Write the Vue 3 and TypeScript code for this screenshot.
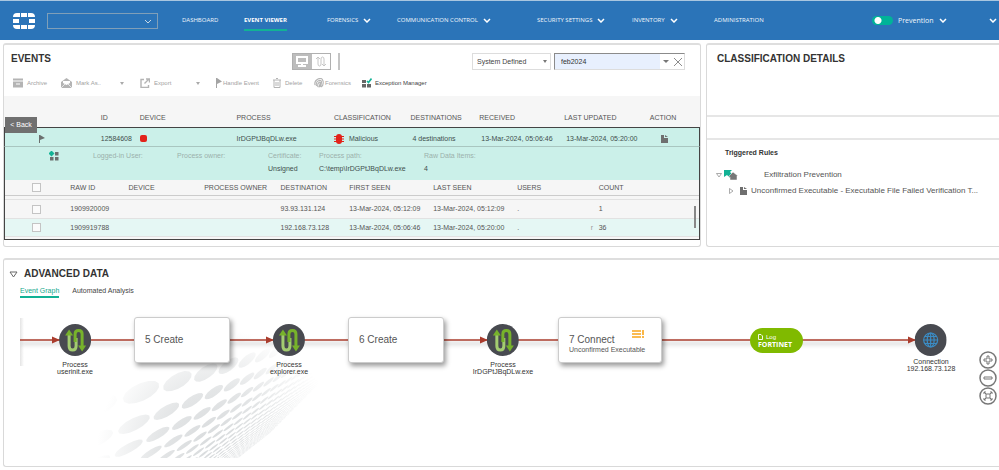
<script setup lang="ts">
import { ref } from 'vue'

interface NavItem { label: string; menu?: boolean; active?: boolean }
interface RawRow { id: string; destination: string; first: string; last: string; users: string; mark: string; count: string }
interface GraphNode { x: number; kind: string; name: string; icon: 'process' | 'globe' }
interface GraphStep { x: number; w: number; title: string; note?: string }

const nav: NavItem[] = [
  { label: 'DASHBOARD' },
  { label: 'EVENT VIEWER', active: true },
  { label: 'FORENSICS', menu: true },
  { label: 'COMMUNICATION CONTROL', menu: true },
  { label: 'SECURITY SETTINGS', menu: true },
  { label: 'INVENTORY', menu: true },
  { label: 'ADMINISTRATION' },
]

const rows: RawRow[] = [
  { id: '1909920009', destination: '93.93.131.124', first: '13-Mar-2024, 05:12:09', last: '13-Mar-2024, 05:12:09', users: '.', mark: '', count: '1' },
  { id: '1909919788', destination: '192.168.73.128', first: '13-Mar-2024, 05:06:46', last: '13-Mar-2024, 05:20:00', users: '.', mark: 'r', count: '36' },
]

const nodes: GraphNode[] = [
  { x: 55, kind: 'Process', name: 'userinit.exe', icon: 'process' },
  { x: 269, kind: 'Process', name: 'explorer.exe', icon: 'process' },
  { x: 483, kind: 'Process', name: 'IrDGPtJBqDLw.exe', icon: 'process' },
  { x: 911, kind: 'Connection', name: '192.168.73.128', icon: 'globe' },
]

const steps: GraphStep[] = [
  { x: 114, w: 96, title: '5 Create' },
  { x: 328, w: 96, title: '6 Create' },
  { x: 538, w: 104, title: '7 Connect', note: 'Unconfirmed Executable' },
]

const search = ref('feb2024')
const prevention = ref(true)

// Halftone floor: a lattice of discs seen in perspective.
function project(i: number, j: number): string {
  const w = 1 + 0.14 * i + 0.17 * j
  return `${((145 * i + j + 156) / w).toFixed(1)} ${((154 * j - 3 * i + 247) / w).toFixed(1)}`
}
function halftone(): string {
  let d = ''
  for (let i = -1; i < 34; i++) {
    for (let j = -1; j < 22; j++) {
      for (let k = 0; k < 14; k++) {
        const t = (k / 14) * Math.PI * 2
        d += `${k ? 'L' : 'M'}${project(i + 0.44 * Math.cos(t), j + 0.27 * Math.sin(t))}`
      }
      d += 'Z'
    }
  }
  return d
}
const dots = halftone()
</script>

<template>
  <div class="app">
    <header class="topbar">
      <svg class="logo" viewBox="0 0 22 16" aria-label="Fortinet">
        <path fill="#fff" d="M4 0h3v4H0A4 4 0 0 1 4 0zM8 0h6v4H8zM15 0h3a4 4 0 0 1 4 4h-7zM0 6h6v4H0zM16 6h6v4h-6zM0 12h7v4H4a4 4 0 0 1-4-4zM8 12h6v4H8zM15 12h7a4 4 0 0 1-4 4h-3z" />
      </svg>
      <div class="org">
        <select aria-label="Organization"><option></option></select>
        <svg class="chev" viewBox="0 0 8 5"><path d="M1 1l3 3 3-3" /></svg>
      </div>
      <nav class="nav">
        <a v-for="n in nav" :key="n.label" href="#" :class="{ active: n.active }">
          <span>{{ n.label }}</span>
          <svg v-if="n.menu" class="chev bold" viewBox="0 0 8 5"><path d="M1 1l3 3 3-3" /></svg>
        </a>
      </nav>
      <label class="switch">
        <input v-model="prevention" type="checkbox" />
        <span>Prevention</span>
        <svg class="chev bold" viewBox="0 0 8 5"><path d="M1 1l3 3 3-3" /></svg>
      </label>
      <button class="user" aria-label="Account">
        <svg class="chev bold" viewBox="0 0 8 5"><path d="M1 1l3 3 3-3" /></svg>
      </button>
    </header>

    <main class="board">
      <section class="panel events">
        <div class="head">
          <h2>EVENTS</h2>
          <div class="views">
            <button class="on" aria-label="Device view">
              <svg viewBox="0 0 12 11"><path fill="#fff" fill-rule="evenodd" d="M0 0h12v8H7v1h3v2H2V9h3V8H0zM2 2v4h8V2z" /></svg>
            </button>
            <button aria-label="Process view">
              <svg viewBox="0 0 12 11" fill="none" stroke="#c6c6c6"><path d="M1 3l2-2 2 2M3 1v7q0 2 1.500 2T6 8V3q0-2 1.500-2T9 3v7M7 8l2 2 2-2" /></svg>
            </button>
          </div>
          <div class="filters">
            <div class="pick">
              <select aria-label="Filter"><option>System Defined</option></select>
              <i class="tri"></i>
            </div>
            <div class="search">
              <input v-model="search" type="text" aria-label="Search" />
              <button aria-label="Search history"><i class="tri big"></i></button>
              <button aria-label="Clear search">
                <svg viewBox="0 0 10 10" width="10" height="10" stroke="#8c8c8c" fill="none"><path d="M1 1l8 8M9 1L1 9" /></svg>
              </button>
            </div>
          </div>
        </div>

        <div class="tools">
          <button>
            <svg viewBox="0 0 10 9" fill="#b4b4b4"><path d="M0 0h10v2H0zM0 3h10v6H0z" /><path fill="#fff" d="M3 5h4v1H3z" /></svg>Archive
          </button>
          <button>
            <svg class="wide" viewBox="0 0 11 10"><path fill="#b4b4b4" d="M0 4l5.500-4L11 4v6H0z" /><path fill="#fff" d="M2 3h7v2L5.500 7 2 5z" /><path fill="none" stroke="#fff" stroke-width=".7" d="M0 10l4-4M11 10L7 6" /></svg>Mark As..<i class="tri"></i>
          </button>
          <button>
            <svg viewBox="0 0 10 10" fill="none" stroke="#b4b4b4" stroke-width="1.400"><path d="M4 1.500H1v8h7.500V7M6 1h3.500v3.500M9 1L4.500 5.500" /></svg>Export<i class="tri"></i>
          </button>
          <button class="tight"><svg class="slim" viewBox="0 0 6 10" fill="#a4a4a4"><path d="M0 0h1l5 3.500L1 6v4H0z" /></svg>Handle Event</button>
          <button><svg class="mid" viewBox="0 0 8 10" fill="none" stroke="#b4b4b4"><path d="M0 2h8M3 .5h2M1 2v7.500h6V2M3 4v4M5 4v4" /></svg>Delete</button>
          <button class="tight"><svg viewBox="0 0 10 10" fill="none" stroke="#b4b4b4" stroke-width="1.100"><path d="M1 7Q0 3 4 1t5 2-2 6M2.500 8Q1.500 4 4.500 2.800T7.500 4 6 9M4 9Q3 6 5 4.500T6 6 5 9.500" /></svg>Forensics</button>
          <button class="live"><svg viewBox="0 0 10 10"><path fill="#666" d="M0 2h4v3H0zM0 6h4v3.500H0zM5 6h4v3.500H5z" /><path fill="none" stroke="#12b295" stroke-width="1.600" d="M5 3l1.500 1.500L9.500.5" /></svg>Exception Manager</button>
        </div>

        <div class="grid">
          <button class="back">&lt; Back</button>
          <table class="list">
            <colgroup><col style="width: 13.900%" /><col style="width: 5.600%" /><col style="width: 13.900%" /><col style="width: 14%" /><col style="width: 11%" /><col style="width: 9.900%" /><col style="width: 12.200%" /><col style="width: 12.300%" /><col style="width: 7.200%" /></colgroup>
            <thead>
              <tr>
                <th></th><th>ID</th><th>DEVICE</th><th>PROCESS</th><th>CLASSIFICATION</th><th>DESTINATIONS</th><th>RECEIVED</th><th>LAST UPDATED</th><th>ACTION</th>
              </tr>
            </thead>
            <tbody>
              <tr class="event">
                <td class="flag"><svg viewBox="0 0 6 8" width="6" height="8" fill="#6b6f6e"><path d="M0 0h1l5 3-5 2v3H0z" /></svg></td>
                <td>12584608</td>
                <td><svg viewBox="0 0 7 7" width="7" height="7"><rect width="7" height="7" rx="2" fill="#e2231a" /></svg></td>
                <td>IrDGPtJBqDLw.exe</td>
                <td>
                  <span class="verdict">
                    <svg viewBox="0 0 10 10" width="10" height="10"><path stroke="#e2231a" d="M0 2.500h10M0 5h10M0 7.500h10" /><rect x="2" y="0" width="6" height="10" rx="3" fill="#e2231a" /></svg>Malicious
                  </span>
                </td>
                <td>4 destinations</td>
                <td>13-Mar-2024, 05:06:46</td>
                <td>13-Mar-2024, 05:20:00</td>
                <td class="act"><svg viewBox="0 0 7 8" width="7" height="8" fill="#6f6f6f"><path d="M0 0h3v3h4v5H0zM4 0l3 2H4z" /></svg></td>
              </tr>
              <tr>
                <td colspan="9" class="more">
                  <div class="detail">
                    <svg viewBox="0 0 10 10" width="10" height="10"><path fill="#6b6f6e" d="M6 1h3.500v3.500H6zM1 6h3.500v3.500H1zM6 6h3.500v3.500H6z" /><path fill="#12b295" d="M2.500-.5L5.500 2.500l-3 3-3-3z" /></svg>
                    <dl><dt>Logged-in User:</dt></dl>
                    <dl><dt>Process owner:</dt></dl>
                    <dl><dt>Certificate:</dt><dd>Unsigned</dd></dl>
                    <dl><dt>Process path:</dt><dd>C:\temp\IrDGPtJBqDLw.exe</dd></dl>
                    <dl><dt>Raw Data Items:</dt><dd>4</dd></dl>
                  </div>
                  <table class="raw">
                    <colgroup><col style="width: 9.400%" /><col style="width: 8.400%" /><col style="width: 10.900%" /><col style="width: 11%" /><col style="width: 9.900%" /><col style="width: 12.100%" /><col style="width: 12.100%" /><col style="width: 10.600%" /><col style="width: 15.600%" /></colgroup>
                    <thead>
                      <tr>
                        <th><input type="checkbox" aria-label="Select all" /></th><th>RAW ID</th><th>DEVICE</th><th>PROCESS OWNER</th><th>DESTINATION</th><th>FIRST SEEN</th><th>LAST SEEN</th><th>USERS</th><th class="num">COUNT</th>
                      </tr>
                    </thead>
                    <tbody>
                      <tr v-for="r in rows" :key="r.id">
                        <td><input type="checkbox" :aria-label="'Select ' + r.id" /></td>
                        <td>{{ r.id }}</td><td></td><td></td>
                        <td>{{ r.destination }}</td><td>{{ r.first }}</td><td>{{ r.last }}</td><td>{{ r.users }}</td>
                        <td><span class="mark">{{ r.mark }}</span>{{ r.count }}</td>
                      </tr>
                    </tbody>
                  </table>
                  <i class="thumb"></i>
                </td>
              </tr>
            </tbody>
          </table>
        </div>
      </section>

      <section class="panel details">
        <h2>CLASSIFICATION DETAILS</h2>
        <div class="strip"></div>
        <h3>Triggered Rules</h3>
        <ul class="tree">
          <li>
            <svg class="tw" viewBox="0 0 6 5" width="6" height="5"><path d="M.5.500h5L3 4z" /></svg>
            <svg viewBox="0 0 14 10" width="14" height="10"><path fill="#12b295" d="M0 0h8L6 2l3 3-3 3-3-3-3 2z" /><path fill="#777" stroke="#fff" stroke-width=".5" d="M9 2l5 4h-1v4H6V7H4z" /></svg>
            <span class="group">Exfiltration Prevention</span>
          </li>
          <li class="leaf">
            <svg class="tw" viewBox="0 0 5 6" width="5" height="6"><path d="M.5.500v5L4 3z" /></svg>
            <svg viewBox="0 0 7 8" width="7" height="8" fill="#6f6f6f"><path d="M0 0h3v3h4v5H0zM4 0l3 2H4z" /></svg>
            <span>Unconfirmed Executable - Executable File Failed Verification T...</span>
          </li>
        </ul>
      </section>

      <section class="panel advanced">
        <h2>
          <svg viewBox="0 0 9 7" width="9" height="7" fill="none" stroke="#666"><path d="M1 1h7L4.500 6z" /></svg>ADVANCED DATA
        </h2>
        <div class="tabs"><a href="#" class="active">Event Graph</a><a href="#">Automated Analysis</a></div>

        <div class="canvas">
          <svg class="floor" viewBox="0 0 735 444">
            <defs>
              <radialGradient id="fade" gradientUnits="userSpaceOnUse" cx="390" cy="430" r="370">
                <stop offset="0" stop-color="#d6d9db" />
                <stop offset=".5" stop-color="#e3e5e6" />
                <stop offset="1" stop-color="#fff" />
              </radialGradient>
            </defs>
            <path :d="dots" fill="url(#fade)" />
          </svg>
          <svg class="wires" viewBox="0 0 980 60">
            <defs>
              <filter id="soft" x="-5%" y="-200%" width="110%" height="500%"><feGaussianBlur stdDeviation="2" /></filter>
              <linearGradient id="edge"><stop offset="0" stop-color="#e4e4e4" /><stop offset="1" stop-color="#fff" /></linearGradient>
            </defs>
            <rect y="8" width="4" height="48" fill="url(#edge)" />
            <rect y="32" width="911" height="3" fill="#bbb" opacity=".6" filter="url(#soft)" />
            <path stroke="#aa3c2d" stroke-width="1.500" d="M0 30h911" />
            <path fill="#aa3c2d" d="M32 26.500L40 30l-8 3.500zM246 26.500L254 30l-8 3.500zM460 26.500L468 30l-8 3.500zM888 26.500L896 30l-8 3.500z" />
          </svg>

          <div v-for="n in nodes" :key="n.x" class="node" :class="n.icon" :style="{ left: n.x + 'px' }">
            <svg v-if="n.icon === 'process'" viewBox="0 0 32 32" width="32" height="32">
              <circle cx="16" cy="16" r="16" fill="#484a50" />
              <path fill="none" stroke="#a3cc70" stroke-width="3" d="M10 10v12q0 4 3.500 4t3.500-4v-8" />
              <path fill="#77b22b" d="M6 11.500L10 5.500l4 6z" />
              <path fill="none" stroke="#77b22b" stroke-width="3" d="M16 18v-8q0-3.500 3.500-3.500T23 10v12" />
              <path fill="#77b22b" d="M19 21.500l4 6 4-6z" />
            </svg>
            <svg v-else viewBox="0 0 32 32" width="32" height="32">
              <circle cx="16" cy="16" r="16" fill="#484a50" />
              <g fill="none" stroke="#3b8cc4" stroke-width="1.200"><circle cx="16" cy="16" r="7" /><ellipse cx="16" cy="16" rx="3.500" ry="7" /><path d="M16 9v14M9 16h14M10 12.500h12M10 19.500h12" /></g>
            </svg>
            <span>{{ n.kind }}</span><span>{{ n.name }}</span>
          </div>

          <div v-for="s in steps" :key="s.x" class="step" :style="{ left: s.x + 'px', width: s.w + 'px' }">
            <strong>{{ s.title }}</strong>
            <small v-if="s.note">{{ s.note }}</small>
            <svg v-if="s.note" viewBox="0 0 12 8" width="12" height="8"><path stroke="#f9a51a" stroke-width="1.600" d="M0 1h9M0 4h9M0 7h9M11 0v5M11 6v2" /></svg>
          </div>

          <div class="pill">
            <span><svg viewBox="0 0 5 6" width="5" height="6" fill="none" stroke="#fff" stroke-width=".9"><path d="M.5.500H3l1.500 1.500v3.500h-4z" /></svg>Log</span>
            <b>FORTINET</b>
          </div>
        </div>

        <div class="zoom">
          <button aria-label="Zoom in"><svg viewBox="0 0 18 18"><circle cx="9" cy="9" r="8" /><path d="M8 5h2v3h3v2h-3v3H8v-3H5V8h3z" /></svg></button>
          <button aria-label="Zoom out"><svg viewBox="0 0 18 18"><circle cx="9" cy="9" r="8" /><path d="M5 8h8v2H5z" /></svg></button>
          <button aria-label="Fit to screen"><svg viewBox="0 0 18 18"><circle cx="9" cy="9" r="8" /><path d="M7 7h4v4H7zM5 5l2 2M13 5l-2 2M5 13l2-2M13 13l-2-2M5 7V5h2M11 5h2v2M5 11v2h2M11 13h2v-2" /></svg></button>
        </div>
      </section>
    </main>
  </div>
</template>

<style>
body { background: #fff; }
</style>

<style scoped>
* { box-sizing: border-box; }
.app { font: 7px/10px "Liberation Sans", Arial, sans-serif; color: #555; overflow: hidden; }
button, input, select { font: inherit; color: inherit; border: 0; background: none; padding: 0; margin: 0; }
select { appearance: none; width: 100%; height: 100%; outline: none; }
a { color: inherit; text-decoration: none; }
h2, h3, dl, dd, ul { margin: 0; padding: 0; }
h2 { font-size: 10px; line-height: 12px; font-weight: 700; color: #333; white-space: nowrap; }
svg { display: block; flex: none; }

.topbar { display: flex; align-items: center; height: 40px; padding-left: 13px; background: #2b74b8; border-top: 1px solid #a9c6e0; color: #f0f6fc; font-family: "Open Sans", "Noto Sans", sans-serif; }
.logo { width: 22px; height: 16px; }
.org { position: relative; width: 111px; height: 16px; margin-left: 12px; border: 1px solid #7f9fb8; }
.org .chev { position: absolute; right: 5px; top: 5px; }
.chev { width: 8px; height: 5px; fill: none; stroke: #c8d8e6; stroke-width: 1; }
.chev.bold { stroke: #fff; stroke-width: 1.500; }
.nav { flex: 690; display: grid; grid-template-columns: 62fr 83fr 70fr 140fr 95fr 82fr 158fr; margin-left: 24px; font-size: 6px; white-space: nowrap; }
.nav a { display: flex; align-items: center; gap: 5px; height: 20px; }
.nav a span { height: 20px; line-height: 18px; }
.nav a.active { font-weight: 700; color: #fff; }
.nav a.active span { border-bottom: 2px solid #12b295; }
.switch { flex: 117; display: flex; align-items: center; gap: 5px; white-space: nowrap; }
.switch input { appearance: none; width: 21px; height: 9px; border-radius: 5px; background: radial-gradient(circle at 6px 50%, #fff 3px, #00b398 4px); }
.user { flex: 10; }

.board { display: grid; grid-template-columns: minmax(0, 698fr) minmax(0, 293fr); grid-template-rows: auto auto; gap: 11px 5px; padding: 3px 0 0 3px; }
.panel { border: 1px solid #d9d9d9; border-top: 2px solid #dedede; border-radius: 3px; background: #fff; min-width: 0; }
.details, .advanced { border-right: 0; border-top-right-radius: 0; border-bottom-right-radius: 0; }
.advanced { grid-column: 1 / -1; }

.head { display: flex; align-items: flex-start; height: 33px; padding: 8px 15px 0 7px; }
.head h2 { width: 43px; }
.views { display: flex; margin-left: 238px; width: 39px; height: 17px; border: 1px solid #b0b0b0; }
.views button { flex: 1; display: grid; place-items: center; }
.views .on { background: #bdbdbd; }
.views svg { width: 12px; height: 11px; }
.filters { flex: 1; display: flex; justify-content: flex-end; gap: 3px; margin-left: 7px; height: 17px; font-size: 7px; }
.filters::before { content: ""; width: 2px; margin-right: auto; background: #c4c4c4; }
.pick { position: relative; width: 79px; border: 1px solid #ddd; color: #444; }
.pick select { padding-left: 4px; }
.pick .tri { position: absolute; right: 3px; top: 6px; }
.search { display: flex; align-items: center; width: 131px; border: 1px solid #ddd; border-top-color: #8b8b8b; border-left-color: #8b8b8b; }
.search input { width: 105px; height: 15px; padding-left: 6px; background: #e8f0fe; color: #333; outline: none; }
.search button { display: grid; place-items: center; flex: 1; }
.tri { display: block; width: 0; border: 2px solid transparent; border-top: 3px solid #777; border-bottom: 0; }
.tri.big { border-left-width: 3px; border-right-width: 3px; }

.tools { display: grid; grid-template-columns: 48px 79px 76px 57px 41px 48px auto; justify-content: start; align-items: start; height: 18px; padding-left: 9px; font-size: 6px; color: #a3a3a3; }
.tools button { display: flex; align-items: center; gap: 4px; white-space: nowrap; }
.tools button.tight { gap: 1px; }
.tools svg { width: 10px; height: 10px; }
.tools .wide { width: 11px; }
.tools .slim { width: 6px; }
.tools .mid { width: 8px; }
.tools .tri { margin-left: auto; margin-right: 16px; border-top-color: #aaa; }
.tools .live { gap: 3px; color: #444; }

.grid { position: relative; padding-bottom: 6px; }
.back { position: absolute; left: 1px; top: 21px; width: 32px; height: 16px; background: #707070; color: #fff; z-index: 2; }
table { width: 100%; table-layout: fixed; border-collapse: separate; border-spacing: 0; background: #f6f6f6; }
th, td { padding: 0; text-align: left; font-weight: 400; white-space: nowrap; }
.list > thead th { height: 31px; padding-bottom: 4px; vertical-align: bottom; color: #555; }
.event td { height: 20px; padding-top: 3px; background: #cbf0e9; border-top: 1px solid #444; border-bottom: 1px solid #a9c6c0; color: #3f4f4d; }
.event td:first-child { border-left: 1px solid #444; }
.event td:last-child { border-right: 1px solid #444; }
.event td:nth-child(n + 6) { padding-left: 2px; }
.flag svg { margin-left: 34px; }
.event .act svg { margin-left: 9px; }
.verdict { display: flex; align-items: center; gap: 5px; }
.more { position: relative; border: 1px solid #444; border-top: 0; }
.detail { display: grid; grid-template-columns: 44px 84px 91px 51px 105px auto; height: 33px; padding: 4px 0 0 44px; background: #cbf0e9; }
.detail dt { color: #9bb0ac; }
.detail dd { margin-top: 3px; color: #3f4f4d; }
.raw thead th { height: 16px; border-bottom: 1px solid #ccc; }
.raw tbody::before { content: ""; display: block; height: 3px; }
.raw tbody td { height: 19px; border-top: 1px solid #e2e2e2; }
.raw tbody tr:last-child td { background: #e5f7f4; border-bottom: 1px solid #e2e2e2; }
.raw { padding-bottom: 2px; }
.raw input { appearance: none; display: block; width: 9px; height: 9px; margin-left: 27px; border: 1px solid #c4c4c4; background: #fbfbfb; }
.mark { display: inline-block; width: 8px; color: #999; }
.num { padding-left: 8px; }
.thumb { position: absolute; right: 3px; bottom: 11px; width: 2px; height: 22px; background: #888; }

.details h2 { height: 70px; padding: 8px 0 0 10px; }
.strip { height: 25px; border-top: 2px solid #e6e6e6; border-bottom: 2px solid #e6e6e6; }
.details h3 { margin: 7px 0 0 18px; font-size: 7px; line-height: 12px; color: #333; }
.tree { list-style: none; padding: 8px 8px 0 9px; font-size: 8px; line-height: 16px; }
.tree li { display: flex; align-items: center; gap: 2px; }
.tree span { overflow: hidden; white-space: nowrap; min-width: 0; }
.tree .group { margin-left: 24px; }
.tree .leaf { gap: 4px; padding-left: 13px; }
.tree .leaf svg + svg { margin-left: 2px; }
.tw { fill: none; stroke: #888; stroke-width: .7; }

.advanced { position: relative; }
.advanced h2 { display: flex; align-items: center; gap: 6px; padding: 8px 0 0 5px; }
.tabs { display: flex; gap: 13px; padding: 5px 0 0 16px; height: 19px; color: #444; }
.tabs a { height: 13px; line-height: 11px; white-space: nowrap; }
.tabs .active { color: #12a88c; border-bottom: 2px solid #12b295; }
.canvas { position: relative; height: 159px; margin: 0 0 8px 16px; overflow: hidden; }
.floor { position: absolute; left: 70px; top: 11px; width: 245px; height: 148px; }
.wires { position: absolute; left: 0; top: 11px; width: 980px; height: 60px; }
.node { position: absolute; top: 25px; display: flex; flex-direction: column; align-items: center; transform: translateX(-50%); line-height: 7px; color: #333; white-space: nowrap; }
.node svg { margin-bottom: 5px; }
.node.globe svg { margin-bottom: 2px; }
.step { position: absolute; top: 18px; height: 46px; padding: 16px 0 0 10px; border: 1px solid #ccc; border-radius: 3px; background: #fff; box-shadow: 2px 3px 5px rgba(0, 0, 0, .4); white-space: nowrap; }
.step strong, .step small { display: block; font-weight: 400; font-size: 10px; line-height: 12px; }
.step small { font-size: 7px; line-height: 8px; }
.step svg { position: absolute; right: 17px; top: 12px; }
.pill { position: absolute; left: 730px; top: 29px; width: 53px; height: 25px; padding: 5px 0 0 8px; border-radius: 13px; background: #80ba00; color: #fff; }
.pill span { display: flex; align-items: center; gap: 3px; font-size: 6px; line-height: 8px; }
.pill b { display: block; font: 700 7px/7px "Open Sans", sans-serif; }
.zoom { position: absolute; right: 2px; top: 91px; display: flex; flex-direction: column; }
.zoom button, .zoom svg { width: 18px; height: 18px; }
.zoom svg { fill: none; stroke: #777; }
.zoom circle { stroke-width: 1.500; }
</style>
